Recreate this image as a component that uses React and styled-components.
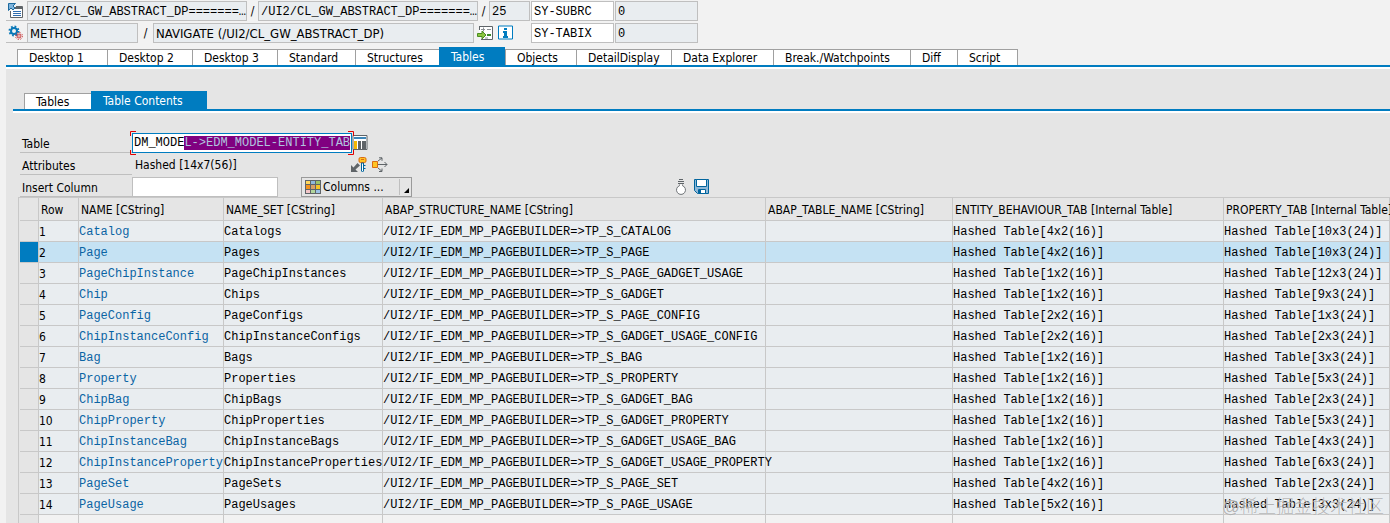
import React, { useEffect, useRef } from "react";
import styled, { createGlobalStyle } from "styled-components";

const sans = `"DejaVu Sans Condensed", "DejaVu Sans", sans-serif`;
const mono = `"Liberation Mono", monospace`;

const mainTabs = [
  { name: "Desktop 1", width: 90 },
  { name: "Desktop 2", width: 85 },
  { name: "Desktop 3", width: 85 },
  { name: "Standard", width: 78 },
  { name: "Structures", width: 84 },
  { name: "Tables", width: 66 },
  { name: "Objects", width: 71 },
  { name: "DetailDisplay", width: 95 },
  { name: "Data Explorer", width: 102 },
  { name: "Break./Watchpoints", width: 137 },
  { name: "Diff", width: 47 },
  { name: "Script", width: 61 },
];

const columns = [
  { name: "NAME [CString]", width: 145 },
  { name: "NAME_SET [CString]", width: 159 },
  { name: "ABAP_STRUCTURE_NAME [CString]", width: 383 },
  { name: "ABAP_TABLE_NAME [CString]", width: 187 },
  { name: "ENTITY_BEHAVIOUR_TAB [Internal Table]", width: 271 },
  { name: "PROPERTY_TAB [Internal Table]" },
];

const rows = [
  ["Catalog", "Catalogs", "CATALOG", "4x2(16)", "10x3(24)"],
  ["Page", "Pages", "PAGE", "4x2(16)", "10x3(24)"],
  ["PageChipInstance", "PageChipInstances", "PAGE_GADGET_USAGE", "1x2(16)", "12x3(24)"],
  ["Chip", "Chips", "GADGET", "1x2(16)", "9x3(24)"],
  ["PageConfig", "PageConfigs", "PAGE_CONFIG", "2x2(16)", "1x3(24)"],
  ["ChipInstanceConfig", "ChipInstanceConfigs", "GADGET_USAGE_CONFIG", "2x2(16)", "2x3(24)"],
  ["Bag", "Bags", "BAG", "1x2(16)", "3x3(24)"],
  ["Property", "Properties", "PROPERTY", "1x2(16)", "5x3(24)"],
  ["ChipBag", "ChipBags", "GADGET_BAG", "1x2(16)", "2x3(24)"],
  ["ChipProperty", "ChipProperties", "GADGET_PROPERTY", "1x2(16)", "5x3(24)"],
  ["ChipInstanceBag", "ChipInstanceBags", "GADGET_USAGE_BAG", "1x2(16)", "4x3(24)"],
  ["ChipInstanceProperty", "ChipInstanceProperties", "GADGET_USAGE_PROPERTY", "1x2(16)", "6x3(24)"],
  ["PageSet", "PageSets", "PAGE_SET", "4x2(16)", "2x3(24)"],
  ["PageUsage", "PageUsages", "PAGE_USAGE", "5x2(16)", "3x3(24)"],
];

const SourceIcon = () => (
  <svg width="16" height="16" viewBox="0 0 16 16">
    <path d="M2.5 8v6.5h12v-11H8" fill="#fff" stroke="#5f6468" />
    <path d="M7 4h8v2H7z" fill="#5f6468" />
    <path d="M5 8.500h8M5 10.500h8M5 12.500h8" stroke="#2f6db0" />
    <path d="M.5.5h7l-2.500 2.500 2 2L5 7 3 5 .5 7.500z" fill="#7fb4dc" stroke="#1d6a9e" />
  </svg>
);

const GearsIcon = () => (
  <svg width="16" height="16" viewBox="0 0 16 16">
    <circle cx="6" cy="6" r="3" fill="none" stroke="#0a78b8" strokeWidth="2" />
    <circle cx="6" cy="6" r="4.500" fill="none" stroke="#0a78b8" strokeWidth="2" strokeDasharray="1.700 1.830" />
    <circle cx="11" cy="11" r="2" fill="none" stroke="#c8393c" />
    <circle cx="11" cy="11" r="3.500" fill="none" stroke="#c8393c" strokeDasharray="1.300 1.450" />
    <circle cx="11" cy="11" r=".7" fill="#c8393c" />
  </svg>
);

const GotoIcon = () => (
  <svg width="16" height="16" viewBox="0 0 16 16">
    <path d="M2 5V1.500h13.500v13H4" fill="#fff" />
    <path d="M2 1.500h13.500v13H4M2.500 1v4" fill="none" stroke="#5f6468" />
    <path d="M4 4.500h4M6.500 2.500v4M10 4.500h4M8 13h3" stroke="#8c9094" />
    <path d="M10 10h4" stroke="#3c8a2c" strokeWidth="2" />
    <path d="M.5 8.500H5V6l4 4-4 4v-2.500H.500z" fill="#8bc53f" stroke="#4b8c22" />
  </svg>
);

const InfoIcon = () => (
  <svg width="16" height="16" viewBox="0 0 16 16">
    <path d="M.5 1h14v13H.5z" fill="#fff" stroke="#007cc0" />
    <path d="M6 3h3v2H6zM5 6h4v5h1v2H5v-2h1V8H5z" fill="#007cc0" />
  </svg>
);

const TableIcon = () => (
  <svg width="16" height="16" viewBox="0 0 16 16">
    <path d="M1 .5h14v14H1z" fill="#fff" stroke="#5f6468" />
    <path d="M2 2h12v2H2z" fill="#3d86b8" />
    <path d="M2 6h3v8H2z" fill="#f5b800" />
    <path d="M6 6h3v8H6zM10 6h4v8h-4z" fill="#5f6468" />
  </svg>
);

const KeyIcon = () => (
  <svg width="16" height="16" viewBox="0 0 16 16">
    <path d="M0 8v7h7l-2.500-2.500L9 8.500 6.500 6l-4 4.500z" fill="#5f6468" />
    <rect x="8" y=".5" width="7" height="5" rx="1.500" fill="#ffc423" stroke="#d96b12" />
    <path d="M10 2.500h3" stroke="#d96b12" />
    <path d="M10.500 6h2v8l-1 1-1-1z" fill="#fff" stroke="#00649d" />
    <path d="M12.500 8.500h2M12.500 11.500h2" stroke="#00649d" />
  </svg>
);

const SpreadIcon = () => (
  <svg width="16" height="16" viewBox="0 0 16 16">
    <path d="M5 7.500h10M12.500 5l2.500 2.500-2.500 2.500M6 4l4-3M7 .8h3v3M6 11l4 3.300M7 14.500h3v-3" fill="none" stroke="#5f6468" />
    <path d="M.5 4.500h5v6h-5z" fill="#ffc423" stroke="#d96b12" />
  </svg>
);

const ColumnsIcon = () => (
  <svg width="16" height="14" viewBox="0 0 16 14">
    <path d="M0 0h16v14H0z" fill="#5f6468" />
    <path d="M1 1h4v3H1z" fill="#ffd65c" />
    <path d="M6 1h4v3H6z" fill="#8fb8dc" />
    <path d="M11 1h4v3h-4z" fill="#9cc46a" />
    <path d="M1 5h4v4H1z" fill="#f2921e" />
    <path d="M6 5h4v4H6z" fill="#d9a066" />
    <path d="M11 5h4v4h-4z" fill="#f7c325" />
    <path d="M1 10h4v3H1z" fill="#f3c6c8" />
    <path d="M6 10h4v3H6z" fill="#b2d69c" />
    <path d="M11 10h4v3h-4z" fill="#9dc3e6" />
  </svg>
);

const BulbIcon = () => (
  <svg width="16" height="16" viewBox="0 0 16 16">
    <path d="M6 .5h4M5 2.500h6M5 4.500h6" stroke="#5f6468" />
    <path d="M6.500 5.500v1.200a4.500 4.500 0 1 0 3 0V5.500" fill="#fff" stroke="#707478" />
  </svg>
);

const SaveIcon = () => (
  <svg width="16" height="16" viewBox="0 0 16 16">
    <path d="M.5.5h14v14H3.500l-3-3z" fill="#8fb8d8" stroke="#00649d" />
    <path d="M2.500.5h10v7h-10zM4.500 10.500h7v4h-7z" fill="#fff" stroke="#00649d" />
    <path d="M5 11h2v3H5z" fill="#00649d" />
  </svg>
);

function App() {
  const tableInput = useRef(null);

  useEffect(() => {
    tableInput.current.focus();
    tableInput.current.setSelectionRange(7, 30);
  }, []);

  return (
    <>
      <GlobalStyle />
      <Page>
        <Header>
          <HeaderRow>
            <IconCell>
              <IconButton aria-label="Source code">
                <SourceIcon />
              </IconButton>
            </IconCell>
            <Field readOnly aria-label="Main program" $width={220} $mono defaultValue="/UI2/CL_GW_ABSTRACT_DP=======…" />
            <Slash $width={11}>/</Slash>
            <Field readOnly aria-label="Include" $width={220} $mono defaultValue="/UI2/CL_GW_ABSTRACT_DP=======…" />
            <Slash $width={11}>/</Slash>
            <Field readOnly aria-label="Line" $width={41} $mono defaultValue="25" />
            <SystemFields>
              <Field aria-label="System field 1" $width={83} $mono $editable defaultValue="SY-SUBRC" />
              <Field readOnly aria-label="SY-SUBRC" $width={83} $mono defaultValue="0" />
            </SystemFields>
          </HeaderRow>
          <HeaderRow>
            <IconCell>
              <IconButton aria-label="Settings">
                <GearsIcon />
              </IconButton>
            </IconCell>
            <Field readOnly aria-label="Event type" $width={111} defaultValue="METHOD" />
            <Slash $width={15}>/</Slash>
            <Field readOnly aria-label="Event" $width={321} defaultValue="NAVIGATE (/UI2/CL_GW_ABSTRACT_DP)" />
            <HeaderIcons>
              <IconButton aria-label="Go to statement">
                <GotoIcon />
              </IconButton>
              <IconButton aria-label="Information">
                <InfoIcon />
              </IconButton>
            </HeaderIcons>
            <SystemFields>
              <Field aria-label="System field 2" $width={83} $mono $editable defaultValue="SY-TABIX" />
              <Field readOnly aria-label="SY-TABIX" $width={83} $mono defaultValue="0" />
            </SystemFields>
          </HeaderRow>
        </Header>

        <TabBar role="tablist">
          {mainTabs.map((tab) => (
            <Tab key={tab.name} role="tab" $width={tab.width} $active={tab.name === "Tables"}>
              {tab.name}
            </Tab>
          ))}
        </TabBar>

        <Panel>
          <TabBar role="tablist">
            <Tab role="tab" $width={67}>
              Tables
            </Tab>
            <Tab role="tab" $width={116} $active>
              Table Contents
            </Tab>
          </TabBar>

          <Form>
            <FormRow>
              <Label htmlFor="table">Table</Label>
              <Focus>
                <TableInput id="table" ref={tableInput} defaultValue="DM_MODEL->EDM_MODEL-ENTITY_TAB" />
                <Corners>
                  <path d="M.5 5V.5H6M.5 19v4.500H6M218 .5h5.500V5M218 23.500h5.500V19" />
                </Corners>
              </Focus>
              <IconButton aria-label="Display table">
                <TableIcon />
              </IconButton>
            </FormRow>
            <FormRow>
              <Label as="span">Attributes</Label>
              <Attributes>Hashed [14x7(56)]</Attributes>
              <IconGroup>
                <IconButton aria-label="Table key">
                  <KeyIcon />
                </IconButton>
                <IconButton aria-label="Expand">
                  <SpreadIcon />
                </IconButton>
              </IconGroup>
            </FormRow>
            <FormRow>
              <Label htmlFor="insert">Insert Column</Label>
              <Field id="insert" $width={146} $mono $editable />
              <ColumnsButton>
                <ColumnsIcon />
                <ColumnsText>Columns ...</ColumnsText>
                <Arrow>
                  <svg width="5" height="5" viewBox="0 0 5 5">
                    <path d="M5 0v5H0z" />
                  </svg>
                </Arrow>
              </ColumnsButton>
              <SaveGroup>
                <IconButton aria-label="Services">
                  <BulbIcon />
                </IconButton>
                <IconButton aria-label="Save">
                  <SaveIcon />
                </IconButton>
              </SaveGroup>
            </FormRow>
          </Form>

          <GridArea>
            <Grid>
              <colgroup>
                <Col $width={19} />
                <Col $width={40} />
                {columns.map((column) => (
                  <Col key={column.name} $width={column.width} />
                ))}
              </colgroup>
              <thead>
                <tr>
                  <HeadCell />
                  <HeadCell>Row</HeadCell>
                  {columns.map((column) => (
                    <HeadCell key={column.name}>{column.name}</HeadCell>
                  ))}
                </tr>
              </thead>
              <tbody>
                {rows.map(([name, set, structure, behaviour, property], i) => (
                  <Row key={name} $selected={i === 1}>
                    <Selector $selected={i === 1} />
                    <NumberCell>{i + 1}</NumberCell>
                    <Cell>
                      <NameLink href="#">{name}</NameLink>
                    </Cell>
                    <Cell>{set}</Cell>
                    <Cell>/UI2/IF_EDM_MP_PAGEBUILDER=&gt;TP_S_{structure}</Cell>
                    <Cell />
                    <Cell>Hashed Table[{behaviour}]</Cell>
                    <Cell>Hashed Table[{property}]</Cell>
                  </Row>
                ))}
                <Row $empty>
                  <Selector />
                  <Cell />
                  {columns.map((column) => (
                    <Cell key={column.name} />
                  ))}
                </Row>
              </tbody>
            </Grid>
          </GridArea>
        </Panel>
        <Watermark>@稀土掘金技术社区</Watermark>
      </Page>
    </>
  );
}

const GlobalStyle = createGlobalStyle`
  * {
    box-sizing: border-box;
  }

  body {
    margin: 0;
    background-color: #f2f2f2;
    color: #000;
    font-family: ${sans};
    font-size: 12px;
  }
`;

const Page = styled.div`
  position: relative;
  height: 100vh;
  padding: 0 0 0 6px;
  overflow: hidden;
`;

const Header = styled.header`
  display: flex;
  flex-direction: column;
  gap: 2px;
  padding-top: 1px;
`;

const HeaderRow = styled.div`
  display: flex;
  align-items: center;
  height: 20px;
`;

const IconCell = styled.div`
  display: flex;
  align-items: center;
  width: 21px;
  height: 20px;
  padding-left: 2px;
  border-bottom: 1px solid #bfbfbf;
`;

const IconButton = styled.button`
  display: flex;
  flex: none;
  align-items: center;
  justify-content: center;
  width: 16px;
  height: 16px;
  padding: 0;
  border: none;
  background: none;
`;

const Field = styled.input`
  width: ${(props) => props.$width}px;
  height: 20px;
  padding: ${(props) => (props.$mono ? "1px 0 0 2px" : "0 2px")};
  border: 1px solid #bfbfbf;
  border-radius: 0;
  outline: none;
  background-color: ${(props) => (props.$editable ? "#fff" : "#e9edf0")};
  color: #000;
  font-family: ${(props) => (props.$mono ? mono : sans)};
  font-size: ${(props) => (props.$mono ? 12 : 13)}px;
`;

const Slash = styled.span`
  width: ${(props) => props.$width}px;
  text-align: center;
`;

const HeaderIcons = styled.div`
  display: flex;
  gap: 5px;
  padding-left: 3px;
  width: 56px;
`;

const SystemFields = styled.div`
  display: flex;
  gap: 1px;
  padding-left: 1px;
`;

const TabBar = styled.div`
  display: flex;
  align-items: flex-end;
  height: 22px;
  padding-left: 11px;
  margin-top: 2px;
  border-bottom: 2px solid #007cc0;
  box-shadow: 0 2px #fff;
`;

const Tab = styled.button`
  width: ${(props) => props.$width}px;
  height: ${(props) => (props.$active ? 18 : 16)}px;
  padding: ${(props) => (props.$active ? "2px 0 0 12px" : "0 0 0 11px")};
  border: solid #a0a0a0;
  border-width: ${(props) => (props.$active ? 0 : "1px 0 0 1px")};
  background-color: ${(props) => (props.$active ? "#007cc0" : "#fff")};
  color: ${(props) => (props.$active ? "#fff" : "#000")};
  font-family: ${sans};
  font-size: 12px;
  line-height: 16px;
  text-align: left;
  white-space: nowrap;

  &:last-child {
    border-right-width: ${(props) => (props.$active ? 0 : 1)}px;
  }
`;

const Panel = styled.main`
  padding: 18px 0 0 7px;
  margin-top: 2px;
  background-color: #e5e5e5;
`;

const Form = styled.div`
  display: flex;
  flex-direction: column;
  gap: 2px;
  padding: 22px 0 0 7px;
`;

const FormRow = styled.div`
  display: flex;
  align-items: center;
  height: 20px;
`;

const Label = styled.label`
  width: 112px;
  height: 20px;
  padding-left: 2px;
  border-bottom: 1px solid #bfbfbf;
  line-height: 22px;
`;

const Focus = styled.div`
  position: relative;
  flex: none;
  width: 220px;
`;

/* red corner marks around the focused field */
const Corners = styled.svg`
  position: absolute;
  top: -2px;
  left: -2px;
  width: 224px;
  height: 24px;
  fill: none;
  stroke: #e00000;
  pointer-events: none;
`;

const TableInput = styled.input`
  display: block;
  width: 100%;
  height: 20px;
  padding: 0 0 0 1px;
  border: 1px solid #007cc0;
  outline: none;
  background-color: #fff;
  font-family: ${mono};
  font-size: 12px;
  line-height: 16px;

  &::selection {
    background-color: #800080;
    color: #b0c4de;
  }
`;

const Attributes = styled.span`
  width: 216px;
  padding-left: 3px;
  margin-right: 3px;
  line-height: 22px;
`;

const IconGroup = styled.div`
  display: flex;
  gap: 5px;
`;

const ColumnsButton = styled.button`
  display: flex;
  flex: none;
  align-items: center;
  width: 111px;
  height: 20px;
  padding: 0 0 0 3px;
  margin-left: 23px;
  border: 1px solid #9a9a9a;
  background-color: #e5e5e5;
  color: #000;
  font-family: ${sans};
  font-size: 12px;
`;

const ColumnsText = styled.span`
  flex: 1;
  padding-left: 2px;
  text-align: left;
`;

const Arrow = styled.span`
  display: flex;
  align-items: flex-end;
  width: 12px;
  height: 16px;
  padding: 0 0 2px 4px;
  border-left: 1px solid #bfbfbf;
`;

const SaveGroup = styled.div`
  display: flex;
  gap: 5px;
  margin-left: 261px;
`;

const GridArea = styled.div`
  padding-left: 1px;
  margin-left: 5px;
  border-top: 1px solid #c8c8c8;
  border-left: 1px solid #c8c8c8;
`;

const Grid = styled.table`
  width: 100%;
  table-layout: fixed;
  border-spacing: 0;
  border-collapse: separate;
`;

const Col = styled.col`
  width: ${(props) => (props.$width ? props.$width + "px" : "auto")};
`;

const Cell = styled.td`
  height: 21px;
  padding: 2px 0 0;
  border-right: 1px solid #c8c8c8;
  border-bottom: 1px solid #c8c8c8;
  font-family: ${mono};
  line-height: 18px;
  white-space: nowrap;
`;

const HeadCell = styled.th`
  height: 23px;
  padding: 2px 0 0 2px;
  border-right: 1px solid #c8c8c8;
  border-bottom: 1px solid #c8c8c8;
  font-weight: normal;
  line-height: 20px;
  text-align: left;
  white-space: nowrap;
`;

const NumberCell = styled(Cell)`
  font-family: ${sans};
`;

const Selector = styled(Cell)`
  background-color: ${(props) => (props.$selected ? "#007cc0" : "#e5e5e5")};
`;

const Row = styled.tr`
  background-color: ${(props) => (props.$selected ? "#c5e2f3" : props.$empty ? "#f2f2f2" : "#e9edf0")};
`;

const NameLink = styled.a`
  color: #0a64a4;
  text-decoration: none;
`;

const Watermark = styled.div`
  position: absolute;
  right: 6px;
  bottom: 4px;
  color: rgba(110, 110, 110, 0.5);
  font-family: "Liberation Sans", "Noto Sans CJK SC", sans-serif;
  font-size: 18px;
  font-weight: 300;
  line-height: 24px;
  text-shadow: 0 0 1px #fff;
  pointer-events: none;
`;

export default App;
